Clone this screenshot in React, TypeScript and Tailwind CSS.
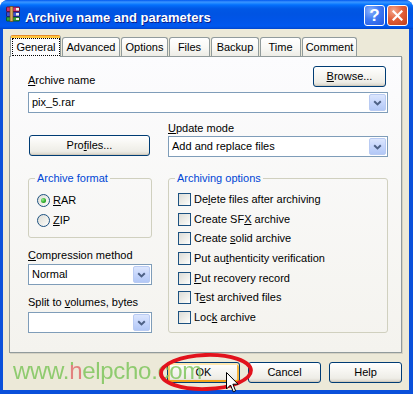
import React from "react";

function U({ children }: { children: React.ReactNode }) {
  return <span className="underline decoration-1 underline-offset-[1px]">{children}</span>;
}

function XPButton({
  children,
  className = "",
  focused = false,
}: {
  children: React.ReactNode;
  className?: string;
  focused?: boolean;
}) {
  return (
    <div
      className={`h-[21px] rounded-[3px] border border-[#003C74] bg-[linear-gradient(180deg,#FFFFFF_0%,#F7F6F2_40%,#EEEDE7_80%,#D8D3C8_100%)] flex items-center justify-center leading-[13px] ${
        focused
          ? "shadow-[inset_0_2px_0_#FFE8B0,inset_0_-2px_0_#EFA31B,inset_2px_0_0_#FAC763,inset_-2px_0_0_#F6B540]"
          : "shadow-[inset_0_-1px_0_#D0CBBE]"
      } ${className}`}
    >
      {children}
    </div>
  );
}

function Chevron() {
  return (
    <svg width="9" height="6" viewBox="0 0 9 6">
      <polyline points="1.2,1.2 4.5,4.4 7.8,1.2" fill="none" stroke="#4D6185" strokeWidth="2" />
    </svg>
  );
}

function Combo({ value, className = "" }: { value?: string; className?: string }) {
  return (
    <div className={`h-[21px] border border-[#7F9DB9] bg-white flex p-[1px] ${className}`}>
      <div className="flex-1 pl-[2px] flex items-center leading-[13px]">{value}</div>
      <div className="w-[17px] rounded-[2px] border border-[#B9CBF3] bg-[linear-gradient(180deg,#DCE6FD_0%,#C6D6FC_50%,#B3C8F6_100%)] flex items-center justify-center">
        <Chevron />
      </div>
    </div>
  );
}

function Checkbox() {
  return (
    <div className="w-[13px] h-[13px] shrink-0 border border-[#1C5180] bg-[linear-gradient(135deg,#DCDCD7_0%,#F3F3EF_70%,#FFFFFF_100%)]" />
  );
}

function Radio({ checked = false }: { checked?: boolean }) {
  return (
    <div className="w-[13px] h-[13px] shrink-0 rounded-full border border-[#1C5180] bg-[linear-gradient(135deg,#DCDCD7_0%,#F3F3EF_70%,#FFFFFF_100%)] flex items-center justify-center">
      {checked && (
        <div className="w-[5px] h-[5px] rounded-full bg-[radial-gradient(circle_at_35%_35%,#9BEA8F_0%,#2FB02F_55%,#167A16_100%)]" />
      )}
    </div>
  );
}

function WinRarIcon() {
  return (
    <svg width="16" height="16" viewBox="0 0 16 16">
      <rect x="1.5" y="11" width="13" height="4" rx="0.5" fill="#2FA23C" stroke="#0D4A14" strokeWidth="0.8" />
      <rect x="11" y="12" width="3" height="2" fill="#EFEFE2" />
      <rect x="1.5" y="6" width="13" height="4.5" rx="0.5" fill="#4050D0" stroke="#14186A" strokeWidth="0.8" />
      <rect x="11" y="7" width="3" height="2.5" fill="#EFEFE2" />
      <rect x="1.5" y="1" width="13" height="4.5" rx="0.5" fill="#D03070" stroke="#5A0A28" strokeWidth="0.8" />
      <rect x="11" y="2" width="3" height="2.5" fill="#EFEFE2" />
      <rect x="5" y="0.5" width="3" height="15" fill="#D8A860" stroke="#6A4A1A" strokeWidth="0.7" />
    </svg>
  );
}

function Tab({ label, w, ml }: { label: string; w: string; ml: string }) {
  return (
    <div
      className={`${w} ${ml} h-[19px] border border-b-0 border-[#919B9C] rounded-t-[3px] bg-[linear-gradient(180deg,#FFFFFF_0%,#F8F8F5_55%,#EDECE6_100%)] flex items-center justify-center leading-[13px]`}
    >
      {label}
    </div>
  );
}

export default function App() {
  return (
    <div className="relative w-[413px] h-[394px] overflow-hidden bg-white font-['Liberation_Sans',Arial,sans-serif] text-[11px] leading-[13px] text-black">
      <div className="w-full h-full flex flex-col rounded-t-[8px] bg-[#0A50DA] overflow-hidden">
        {/* Title bar */}
        <div className="h-[29px] shrink-0 flex items-start pl-[5px] pr-[5px] bg-[linear-gradient(180deg,#0058EE_0px,#3A93FF_2px,#288EFF_3px,#127DFF_4px,#036FFC_5px,#0262EE_7px,#0057E5_9px,#0054E3_14px,#0055EA_22px,#0058F0_26px,#004FDD_28px,#0040C8_29px)]">
          <div className="mt-[6px]">
            <WinRarIcon />
          </div>
          <div className="ml-[4px] mt-[10px] text-white font-bold text-[13px] leading-[15px] [text-shadow:1px_1px_0_#0A1E8C]">
            Archive name and parameters
          </div>
          <div className="ml-auto mt-[5px] flex gap-[2px]">
            <div className="w-[21px] h-[21px] rounded-[3px] border border-white bg-[radial-gradient(circle_at_30%_25%,#8DB2FB_0%,#3F7AF3_45%,#2458E2_100%)] flex items-center justify-center text-white font-bold text-[17px] leading-[17px]">
              ?
            </div>
            <div className="w-[21px] h-[21px] rounded-[3px] border border-white bg-[radial-gradient(circle_at_30%_25%,#F4A78C_0%,#E2603A_45%,#C23C18_100%)] flex items-center justify-center">
              <svg width="11" height="11" viewBox="0 0 11 11">
                <line x1="1.5" y1="1.5" x2="9.5" y2="9.5" stroke="white" strokeWidth="2.2" strokeLinecap="square" />
                <line x1="9.5" y1="1.5" x2="1.5" y2="9.5" stroke="white" strokeWidth="2.2" strokeLinecap="square" />
              </svg>
            </div>
          </div>
        </div>

        {/* Body */}
        <div className="flex-1 ml-[3px] mr-[4px] mb-[4px] bg-[#ECE9D8] flex flex-col pl-[6px] pr-[7px] pt-[6px]">
          {/* Tabs */}
          <div className="h-[21px] flex items-end pl-[1px] relative z-10">
            <div className="w-[51px] h-[22px] -mb-[1px] border-x border-t border-[#919B9C] border-t-[#E68B2C] rounded-t-[3px] bg-[#FCFCFE] flex flex-col">
              <div className="h-[2px] bg-[#FFC73C]" />
              <div className="ml-[1px] w-[48px] h-[18px] border border-dotted border-black flex items-center justify-center leading-[13px]">
                General
              </div>
            </div>
            <Tab label="Advanced" w="w-[58px]" ml="ml-[1px]" />
            <Tab label="Options" w="w-[47px]" ml="ml-[1px]" />
            <Tab label="Files" w="w-[41px]" ml="ml-[1px]" />
            <Tab label="Backup" w="w-[48px]" ml="ml-[1px]" />
            <Tab label="Time" w="w-[41px]" ml="ml-[1px]" />
            <Tab label="Comment" w="w-[55px]" ml="ml-[1px]" />
          </div>

          {/* Panel */}
          <div className="h-[297px] border border-[#919B9C] shadow-[1px_1px_0_#D5D2C4] bg-[linear-gradient(180deg,#FCFCFE_0%,#F4F3EE_100%)] pt-[9px] pl-[18px] pr-[13px]">
            <div className="h-[21px] flex items-end justify-between">
              <div>
                <U>A</U>rchive name
              </div>
              <XPButton className="w-[73px] mr-[2px]">
                <span>
                  <U>B</U>rowse...
                </span>
              </XPButton>
            </div>
            <Combo value="pix_5.rar" className="mt-[5px]" />

            <div className="flex gap-[16px]">
              {/* Left column */}
              <div className="w-[124px] flex flex-col">
                <XPButton className="mt-[22px] ml-[1px] w-[121px]">
                  <span>
                    Pro<U>f</U>iles...
                  </span>
                </XPButton>

                <fieldset className="mt-[16px] border border-[#D0D0BF] rounded-[3px] pb-[10px] min-w-0">
                  <legend className="ml-[6px] px-[2px] text-[#0046D5] leading-[13px]">Archive format</legend>
                  <div className="pl-[8px] pt-[9px] flex flex-col gap-[7px]">
                    <div className="flex items-center gap-[3px] h-[13px]">
                      <Radio checked />
                      <span>
                        <U>R</U>AR
                      </span>
                    </div>
                    <div className="flex items-center gap-[3px] h-[13px]">
                      <Radio />
                      <span>
                        <U>Z</U>IP
                      </span>
                    </div>
                  </div>
                </fieldset>

                <div className="mt-[11px]">
                  <U>C</U>ompression method
                </div>
                <Combo value="Normal" className="mt-[2px]" />
                <div className="mt-[11px]">
                  Split to <U>v</U>olumes, bytes
                </div>
                <Combo value="" className="mt-[3px]" />
              </div>

              {/* Right column */}
              <div className="w-[220px] flex flex-col">
                <div className="mt-[9px]">
                  <U>U</U>pdate mode
                </div>
                <Combo value="Add and replace files" className="mt-[1px]" />

                <fieldset className="mt-[15px] border border-[#D0D0BF] rounded-[3px] pb-[8px] min-w-0">
                  <legend className="ml-[6px] px-[2px] text-[#0046D5] leading-[13px]">Archiving options</legend>
                  <div className="pl-[9px] pt-[8px] flex flex-col gap-[6.67px]">
                    {[
                      <>De<U>l</U>ete files after archiving</>,
                      <>Create SF<U>X</U> archive</>,
                      <>Create <U>s</U>olid archive</>,
                      <>Put au<U>t</U>henticity verification</>,
                      <><U>P</U>ut recovery record</>,
                      <>T<U>e</U>st archived files</>,
                      <>Loc<U>k</U> archive</>,
                    ].map((label, i) => (
                      <div key={i} className="flex items-center gap-[3px] h-[13px]">
                        <Checkbox />
                        <span className="whitespace-nowrap">{label}</span>
                      </div>
                    ))}
                  </div>
                </fieldset>
              </div>
            </div>
          </div>

          {/* Bottom buttons */}
          <div className="mt-[9px] flex justify-end gap-[8px]">
            <XPButton className="w-[73px]" focused>
              OK
            </XPButton>
            <XPButton className="w-[73px]">Cancel</XPButton>
            <XPButton className="w-[73px]">Help</XPButton>
          </div>
        </div>
      </div>

      {/* Watermark overlay */}
      <div className="absolute left-[13px] top-[359px] text-[24px] leading-[24px] tracking-[-0.3px] text-[#79C456] opacity-80 whitespace-nowrap pointer-events-none">
        www.
        <span className="bg-[linear-gradient(180deg,#79C456_0%,#79C456_31%,#E06868_31%,#E06868_100%)] bg-clip-text text-transparent">
          h
        </span>
        elpcho.com
      </div>

      {/* Red ellipse */}
      <svg className="absolute left-[155px] top-[350px] pointer-events-none" width="104" height="44" viewBox="0 0 104 44">
        <ellipse cx="51" cy="22" rx="45" ry="17" fill="none" stroke="#E2121C" strokeWidth="3.8" transform="rotate(-2 51 22)" />
      </svg>

      {/* Cursor */}
      <svg className="absolute left-[226px] top-[372px] pointer-events-none" width="14" height="22" viewBox="0 0 14 22">
        <path d="M0.5 0.5 L0.5 17 L4.5 13 L7.3 19.8 L9.6 18.8 L6.9 12.2 L12 12.2 Z" fill="white" stroke="black" strokeWidth="1" strokeLinejoin="miter" />
      </svg>
    </div>
  );
}
